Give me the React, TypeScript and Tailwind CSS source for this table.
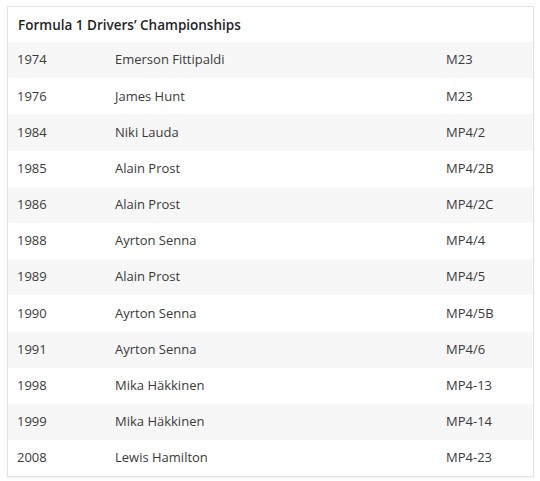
import React from 'react';

interface Title {
  year: string;
  driver: string;
  car: string;
}

const titles: Title[] = [
  { year: '1974', driver: 'Emerson Fittipaldi', car: 'M23' },
  { year: '1976', driver: 'James Hunt', car: 'M23' },
  { year: '1984', driver: 'Niki Lauda', car: 'MP4/2' },
  { year: '1985', driver: 'Alain Prost', car: 'MP4/2B' },
  { year: '1986', driver: 'Alain Prost', car: 'MP4/2C' },
  { year: '1988', driver: 'Ayrton Senna', car: 'MP4/4' },
  { year: '1989', driver: 'Alain Prost', car: 'MP4/5' },
  { year: '1990', driver: 'Ayrton Senna', car: 'MP4/5B' },
  { year: '1991', driver: 'Ayrton Senna', car: 'MP4/6' },
  { year: '1998', driver: 'Mika Häkkinen', car: 'MP4-13' },
  { year: '1999', driver: 'Mika Häkkinen', car: 'MP4-14' },
  { year: '2008', driver: 'Lewis Hamilton', car: 'MP4-23' },
];

export default function App() {
  return (
    <div className="w-[540px] h-[481px] bg-white pt-[6px] pl-[7px] font-['Open_Sans',sans-serif]">
      <div className="w-[527px] border border-[#e3e3e3] shadow-[0_1px_2px_rgba(0,0,0,0.06)] bg-white">
        <div className="h-[35px] flex items-center pt-[2px] pl-[10px] text-[13.5px] font-semibold text-[#1f1f1f]">
          Formula 1 Drivers’ Championships
        </div>
        {titles.map((t, i) => (
          <div
            key={t.year}
            className={`h-[36.2px] grid grid-cols-[98px_331px_1fr] items-center pl-[9px] text-[13px] text-[#3a3a3a] ${
              i % 2 === 0 ? 'bg-[#f7f7f7]' : 'bg-white'
            }`}
          >
            <span>{t.year}</span>
            <span>{t.driver}</span>
            <span>{t.car}</span>
          </div>
        ))}
      </div>
    </div>
  );
}
